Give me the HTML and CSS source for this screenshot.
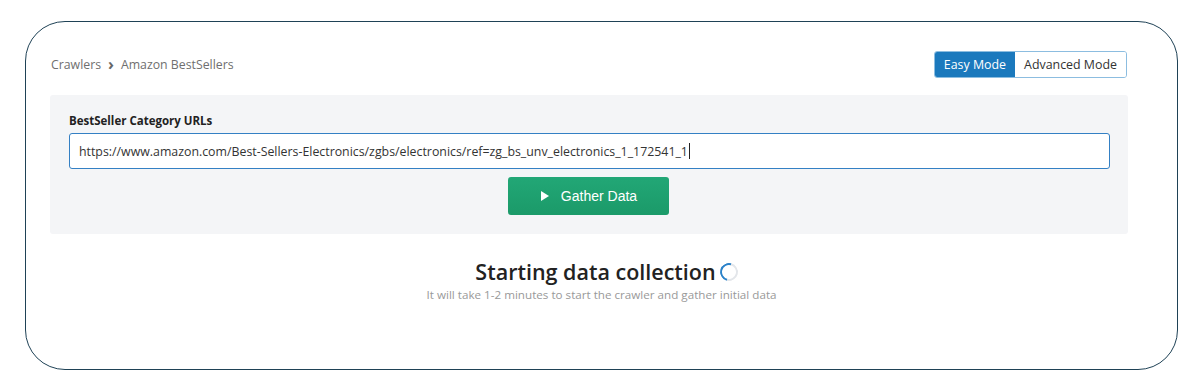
FILE: index.html
```html
<!DOCTYPE html>
<html lang="en">

<head>
    <meta charset="UTF-8">
    <meta name="viewport" content="width=device-width, initial-scale=1.0">
    <title>Amazon BestSellers Crawler</title>
    <link rel="stylesheet" href="styles.css">
</head>

<body>
    <div class="frame">
        <div class="top-bar">
            <div class="breadcrumb">
                <span>Crawlers</span>
                <span class="crumb-sep">&#x203A;</span>
                <span>Amazon BestSellers</span>
            </div>
            <div class="mode-toggle">
                <button class="mode-btn active">Easy Mode</button>
                <button class="mode-btn">Advanced Mode</button>
            </div>
        </div>

        <div class="form-panel">
            <label for="urls">BestSeller Category URLs</label>
            <div class="url-input" id="urls">https://www.amazon.com/Best-Sellers-Electronics/zgbs/electronics/ref=zg_bs_unv_electronics_1_172541_1<span class="caret"></span></div>
            <div class="actions">
                <button class="btn-gather">
                    <svg width="8" height="10" viewBox="0 0 8 10"><path d="M0 0 L8 5 L0 10 Z" fill="#fff"/></svg>
                    Gather Data
                </button>
            </div>
        </div>

        <div class="status">
            <h2>Starting data collection <span class="spinner"></span></h2>
            <p>It will take 1-2 minutes to start the crawler and gather initial data</p>
        </div>
    </div>
</body>

</html>
```

FILE: styles.css
```css
* {
    box-sizing: border-box;
    margin: 0;
    padding: 0;
}

body {
    background: #fff;
    font-family: 'Open Sans', 'Noto Sans', sans-serif;
    color: #333;
}

.frame {
    margin: 21px 0 0 25px;
    width: 1153px;
    height: 349px;
    border: 1.5px solid #1f4256;
    border-radius: 40px;
    padding: 29px 49px 0 24px;
}

.top-bar {
    display: flex;
    justify-content: space-between;
    align-items: center;
    height: 27px;
}

.breadcrumb {
    font-size: 12.3px;
    color: #6f6f6f;
    display: flex;
    align-items: center;
    gap: 7px;
    padding-left: 1px;
}

.crumb-sep {
    font-weight: 700;
    font-size: 16px;
    color: #666;
    margin-top: -2px;
}

.mode-toggle {
    display: flex;
    border: 1px solid #8cbde0;
    border-radius: 3px;
    overflow: hidden;
    margin-right: 1px;
}

.mode-btn {
    font-family: inherit;
    font-size: 12.4px;
    background: #fff;
    color: #333;
    border: none;
    padding: 0 9px;
    height: 25px;
}

.mode-btn.active {
    background: #1b79bd;
    color: #fff;
}

.form-panel {
    margin-top: 17px;
    background: #f4f5f7;
    border-radius: 3px;
    padding: 18px 18px 19px 19px;
}

label {
    display: block;
    font-size: 11.5px;
    font-weight: 700;
    color: #222;
    line-height: 16px;
    margin-bottom: 4px;
}

.url-input {
    height: 36px;
    background: #fff;
    border: 1px solid #3480c4;
    border-radius: 3px;
    padding: 0 9px;
    display: flex;
    align-items: center;
    font-size: 12.35px;
    color: #333;
}

.caret {
    display: inline-block;
    width: 1px;
    height: 16px;
    background: #222;
    margin-left: 1px;
}

.actions {
    display: flex;
    justify-content: center;
    margin-top: 8px;
    padding-right: 3px;
}

.btn-gather {
    width: 161px;
    height: 38px;
    border: none;
    border-radius: 3px;
    background: linear-gradient(#22a776, #1b9a69);
    color: #fff;
    font-family: 'Liberation Sans', Arial, sans-serif;
    font-size: 14px;
    display: flex;
    align-items: center;
    justify-content: center;
    gap: 12px;
    padding-left: 2px;
}

.status {
    text-align: center;
    margin: 24px -49px 0 -24px;
}

.status h2 {
    font-size: 21.5px;
    font-weight: 600;
    color: #222;
    line-height: 28px;
    display: inline-flex;
    align-items: center;
    gap: 4px;
    margin-left: 10px;
}

.spinner {
    display: inline-block;
    width: 18px;
    height: 18px;
    border: 2.5px solid #e3e6ea;
    border-left-color: #2b82c9;
    border-top-color: #2b82c9;
    border-radius: 50%;
    transform: rotate(-30deg);
}

.status p {
    font-size: 11.65px;
    color: #999;
    margin-top: 1px;
}
```
